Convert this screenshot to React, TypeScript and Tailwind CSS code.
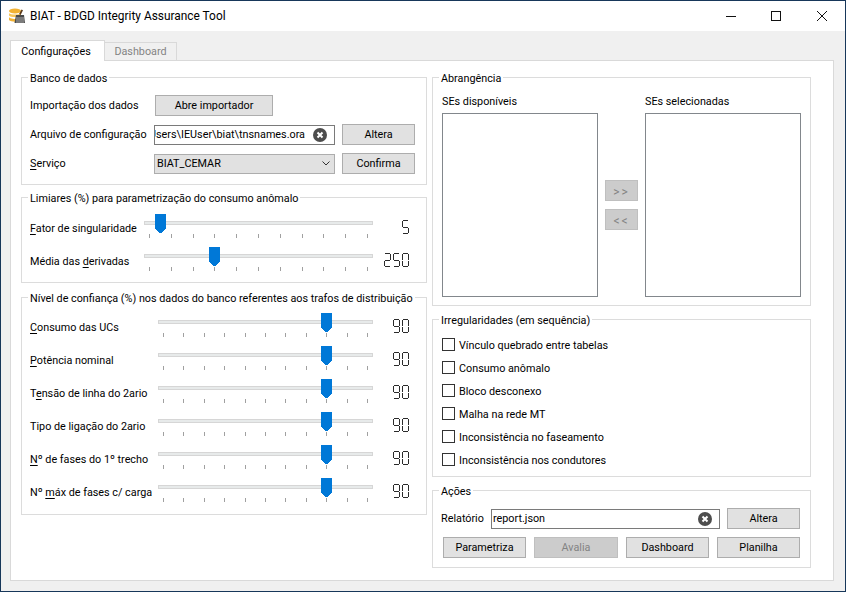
import type { ReactNode } from "react";

// Which segments light up for each digit: top, upper left, upper right, middle, lower left, lower right, bottom
const SEGMENTS: Record<string, number[]> = {
    "0": [0, 1, 2, 4, 5, 6],
    "2": [0, 2, 3, 4, 6],
    "5": [0, 1, 3, 5, 6],
    "9": [0, 1, 2, 3, 5, 6],
};

const SEGMENT_RECTS = [
    [1, 0, 5, 1],
    [0, 1, 1, 6],
    [6, 1, 1, 6],
    [1, 7, 5, 1],
    [0, 8, 1, 5],
    [6, 8, 1, 5],
    [1, 13, 5, 1],
];

function LcdNumber({ value }: { value: string }) {
    const digits = value.split("");
    return (
        <div className="relative">
            <span className="sr-only">{value}</span>
            <svg width={digits.length * 9 - 2} height={14} shapeRendering="crispEdges" aria-hidden="true">
                {digits.map((digit, i) =>
                    SEGMENTS[digit].map((seg) => {
                        const [x, y, w, h] = SEGMENT_RECTS[seg];
                        return <rect key={`${i}-${seg}`} x={x + i * 9} y={y} width={w} height={h} fill="#2b2b2b" />;
                    })
                )}
            </svg>
        </div>
    );
}

function Group({ title, className, children }: { title: string; className: string; children: ReactNode }) {
    return (
        <div className={`relative border border-[#dcdcdc] ${className}`}>
            <span className="absolute left-[6px] top-[-8px] whitespace-nowrap bg-white px-[2px] pt-px leading-[16px]">{title}</span>
            {children}
        </div>
    );
}

function Button({ children, width, disabled }: { children: ReactNode; width: string; disabled?: boolean }) {
    return (
        <div
            className={`flex h-[21px] shrink-0 items-center justify-center border pt-[2px] ${width} ${
                disabled
                    ? "border-[#bfbfbf] bg-[#cccccc] text-[#838383]"
                    : "border-[#adadad] bg-[#e1e1e1] text-black"
            }`}
        >
            {children}
        </div>
    );
}

function ClearIcon() {
    return (
        <svg width="14" height="14" viewBox="0 0 14 14" className="shrink-0">
            <circle cx="7" cy="7" r="7" fill="#4d4d4d" />
            <path d="M4.5 4.5l5 5M9.5 4.5l-5 5" stroke="#fff" strokeWidth="2" />
        </svg>
    );
}

function Slider({ label, value, trackWidth, handleLeft }: {
    label: ReactNode;
    value: string;
    trackWidth: string;
    handleLeft: number;
}) {
    return (
        <div className="flex h-[24px]">
            <div className="w-0 flex-1 whitespace-nowrap pt-[7px] leading-[16px]">{label}</div>
            <div className={`relative h-[24px] shrink-0 ${trackWidth}`}>
                <div className="mt-[7px] h-[4px] border border-[#d6d6d6] bg-[#e7eaea]" />
                <div className="mt-[9px] flex justify-between pl-[5px] pr-[5px]">
                    {Array.from({ length: 11 }).map((_, i) => (
                        <div key={i} className="h-[4px] w-px bg-[#a0a0a0]" />
                    ))}
                </div>
                <svg
                    width="11"
                    height="19"
                    shapeRendering="crispEdges"
                    className="absolute top-0"
                    style={{ left: `${handleLeft}px` }}
                >
                    <path d="M0 0H11V15H10V16H9V17H8V18H7V19H4V18H3V17H2V16H1V15H0Z" fill="#0078d7" />
                </svg>
            </div>
            <div className="flex w-[36px] shrink-0 justify-end pt-[6px]">
                <LcdNumber value={value} />
            </div>
        </div>
    );
}

function Mnemonic({ before = "", letter, after = "" }: { before?: string; letter: string; after?: string }) {
    return (
        <>
            {before}
            <span className="underline underline-offset-2">{letter}</span>
            {after}
        </>
    );
}

const irregularidades = [
    "Vínculo quebrado entre tabelas",
    "Consumo anômalo",
    "Bloco desconexo",
    "Malha na rede MT",
    "Inconsistência no faseamento",
    "Inconsistência nos condutores",
];

const confianca: ReactNode[] = [
    <Mnemonic letter="C" after="onsumo das UCs" />,
    <Mnemonic letter="P" after="otência nominal" />,
    <Mnemonic before="T" letter="e" after="nsão de linha do 2ario" />,
    "Tipo de ligação do 2ario",
    <Mnemonic letter="N" after="º de fases do 1º trecho" />,
    <Mnemonic before="Nº " letter="m" after="áx de fases c/ carga" />,
];

export default function App() {
    return (
        <div className="flex h-[592px] w-[846px] flex-col overflow-hidden border border-[#17375a] bg-[#f0f0f0] font-['Roboto',sans-serif] text-[10.8px] text-black">
            {/* Title bar */}
            <div className="flex h-[30px] shrink-0 items-center bg-white pl-[8px]">
                <svg width="16" height="16" viewBox="0 0 16 16" className="mr-[5px]">
                    <ellipse cx="6" cy="3" rx="6" ry="2.5" fill="#f2b233" />
                    <path d="M0 5c1 2 11 2 12 0v2.5c-1 2-11 2-12 0z" fill="#f7c65a" />
                    <path d="M0 9c1 2 7 2 8 2v2.5c-2 .5-7 0-8-1.5z" fill="#f2b233" />
                    <path d="M12.5 1.5l1.5.8-2.4 4.6-1.5-.8z" fill="#5a3a1a" />
                    <path d="M7 7h8l1 8H5.5z" fill="#4a4a4a" />
                    <path d="M8 9v6M10 9v6M12 9v6M14 9v6" stroke="#d8d8d8" strokeWidth="0.7" />
                </svg>
                <span className="pt-px text-[11.9px]">BIAT - BDGD Integrity Assurance Tool</span>
                <div className="ml-auto flex items-center pr-[18px]">
                    <svg width="10" height="10" className="mr-[35px]" shapeRendering="crispEdges">
                        <rect x="0" y="5" width="10" height="1" fill="#111" />
                    </svg>
                    <svg width="10" height="10" className="mr-[36px]" shapeRendering="crispEdges">
                        <rect x="0.5" y="0.5" width="9" height="9" fill="none" stroke="#111" />
                    </svg>
                    <svg width="10" height="10">
                        <path d="M0 0l10 10M10 0L0 10" stroke="#111" strokeWidth="1" />
                    </svg>
                </div>
            </div>

            <div className="flex flex-1 flex-col px-[9px] pt-[9px]">
                {/* Tabs */}
                <div className="relative z-10 -mb-px flex h-[21px] items-end">
                    <div className="flex h-[21px] w-[95px] items-center justify-center border border-b-0 border-[#d9d9d9] bg-white pr-[3px] pt-[2px]">
                        Configurações
                    </div>
                    <div className="mb-px flex h-[18px] w-[72px] items-center justify-center border border-b-0 border-l-0 border-[#d9d9d9] bg-[#f0f0f0] pt-[2px] text-[#838383]">
                        Dashboard
                    </div>
                </div>

                <div className="flex h-[521px] w-[824px] gap-[5px] border border-[#d9d9d9] bg-white pl-[10px] pt-[16px]">
                    {/* Left column */}
                    <div className="flex w-[406px] flex-col">
                        <Group title="Banco de dados" className="h-[108px] pl-[8px] pt-[17px]">
                            <div className="flex h-[21px] items-center">
                                <div className="w-[125px] whitespace-nowrap pt-[2px]">Importação dos dados</div>
                                <Button width="w-[118px]">Abre importador</Button>
                            </div>
                            <div className="mt-[8px] flex h-[21px] items-center">
                                <div className="w-[124px] whitespace-nowrap pt-[2px]">Arquivo de configuração</div>
                                <div className="flex h-[20px] w-[181px] items-center border border-[#7a7a7a] bg-white pr-[7px]">
                                    <div className="flex w-[150px] justify-end overflow-hidden whitespace-nowrap pt-[2px]">
                                        C:\Users\IEUser\biat\tnsnames.ora
                                    </div>
                                    <div className="ml-auto"><ClearIcon /></div>
                                </div>
                                <div className="ml-[7px]"><Button width="w-[73px]">Altera</Button></div>
                            </div>
                            <div className="mt-[8px] flex h-[21px] items-center">
                                <div className="w-[124px] pt-[2px]"><Mnemonic letter="S" after="erviço" /></div>
                                <div className="flex h-[20px] w-[181px] items-center border border-[#adadad] bg-[#e1e1e1] pl-[2px] pr-[4px]">
                                    <span className="pt-[2px]">BIAT_CEMAR</span>
                                    <svg width="8" height="5" className="ml-auto">
                                        <path d="M.5.5L4 4 7.5.5" fill="none" stroke="#333" />
                                    </svg>
                                </div>
                                <div className="ml-[7px]"><Button width="w-[73px]">Confirma</Button></div>
                            </div>
                        </Group>

                        <Group title="Limiares (%) para parametrização do consumo anômalo" className="mt-[12px] h-[86px] pl-[8px] pr-[17px] pt-[16px]">
                            <div className="flex flex-col gap-[9px]">
                                <Slider label={<Mnemonic letter="F" after="ator de singularidade" />} value="5" trackWidth="w-[229px]" handleLeft={11} />
                                <Slider label={<Mnemonic before="Média das " letter="d" after="erivadas" />} value="250" trackWidth="w-[229px]" handleLeft={65} />
                            </div>
                        </Group>

                        <Group title="Nível de confiança (%) nos dados do banco referentes aos trafos de distribuição" className="mt-[14px] h-[218px] pl-[8px] pr-[17px] pt-[15px]">
                            <div className="flex flex-col gap-[9px]">
                                {confianca.map((label, i) => (
                                    <Slider key={i} label={label} value="90" trackWidth="w-[215px]" handleLeft={163} />
                                ))}
                            </div>
                        </Group>
                    </div>

                    {/* Right column */}
                    <div className="flex w-[379px] flex-col">
                        <Group title="Abrangência" className="h-[229px] pl-[9px] pt-[15px]">
                            <div className="flex">
                                <div className="w-[156px]">
                                    <div className="h-[15px] pt-px leading-[15px]">SEs disponíveis</div>
                                    <div className="mt-[5px] h-[184px] border border-[#82878c] bg-white" />
                                </div>
                                <div className="w-[47px] pl-[7px] pt-[87px]">
                                    <Button width="w-[33px]" disabled>
                                        <span className="text-[12px] tracking-[2px]">&gt;&gt;</span>
                                    </Button>
                                    <div className="mt-[8px]">
                                        <Button width="w-[33px]" disabled>
                                            <span className="text-[12px] tracking-[2px]">&lt;&lt;</span>
                                        </Button>
                                    </div>
                                </div>
                                <div className="w-[156px]">
                                    <div className="h-[15px] pt-px leading-[15px]">SEs selecionadas</div>
                                    <div className="mt-[5px] h-[184px] border border-[#82878c] bg-white" />
                                </div>
                            </div>
                        </Group>

                        <Group title="Irregularidades (em sequência)" className="mt-[13px] h-[158px] pl-[9px] pt-[18px]">
                            <div className="flex flex-col gap-[10px]">
                                {irregularidades.map((item) => (
                                    <div key={item} className="flex h-[13px] items-center gap-[4px]">
                                        <div className="h-[13px] w-[13px] border border-[#333] bg-white" />
                                        <span className="pt-[3px]">{item}</span>
                                    </div>
                                ))}
                            </div>
                        </Group>

                        <Group title="Ações" className="mt-[13px] h-[78px] pl-[8px] pt-[17px]">
                            <div className="flex h-[21px] items-center">
                                <div className="w-[50px] pt-[2px]">Relatório</div>
                                <div className="flex h-[20px] w-[229px] items-center border border-[#7a7a7a] bg-white pl-[1px] pr-[7px]">
                                    <span className="pt-[2px]">report.json</span>
                                    <div className="ml-auto"><ClearIcon /></div>
                                </div>
                                <div className="ml-[7px]"><Button width="w-[73px]">Altera</Button></div>
                            </div>
                            <div className="mt-[8px] flex gap-[8px] pl-[2px]">
                                <Button width="w-[83px]">Parametriza</Button>
                                <Button width="w-[84px]" disabled>Avalia</Button>
                                <Button width="w-[83px]">Dashboard</Button>
                                <Button width="w-[83px]">Planilha</Button>
                            </div>
                        </Group>
                    </div>
                </div>
            </div>
        </div>
    );
}
